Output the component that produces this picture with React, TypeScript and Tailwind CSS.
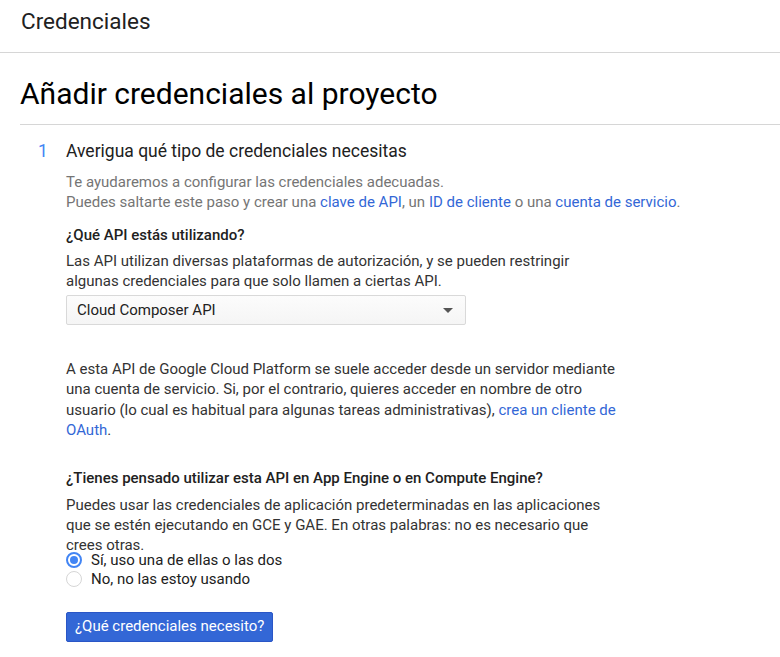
import React from "react";

export default function App() {
  const link = "text-[#3367d6]";
  return (
    <div className="w-[780px] h-[657px] bg-white overflow-hidden text-[#212121]" style={{ fontFamily: "Roboto, 'Liberation Sans', sans-serif" }}>
      <div className="h-[53px] border-b border-[#d6d6d6] pl-[21px] pt-[6px]">
        <div className="text-[22.5px] leading-[30px] text-[#212121]">Credenciales</div>
      </div>
      <div className="ml-[20px] border-b border-[#d6d6d6] pt-[22px] pb-[12px]">
        <h1 className="text-[30px] leading-[37px] text-[#000]">Añadir credenciales al proyecto</h1>
      </div>
      <div className="flex pt-[14px]">
        <div className="w-[66px] pl-[38px] text-[17.5px] leading-[24px] text-[#4285f4]">1</div>
        <div className="flex-1">
          <div className="text-[17.5px] leading-[24px] text-[#212121]">Averigua qué tipo de credenciales necesitas</div>
          <div className="mt-[10px] text-[15px] leading-[19.5px] text-[#757575]">
            <div>Te ayudaremos a configurar las credenciales adecuadas.</div>
            <div>
              Puedes saltarte este paso y crear una <span className={link}>clave de API</span>, un{" "}
              <span className={link}>ID de cliente</span> o una <span className={link}>cuenta de servicio</span>.
            </div>
          </div>
          <div className="mt-[13px] text-[15px] leading-[20px] font-medium text-[#212121]">¿Qué API estás utilizando?</div>
          <div className="mt-[6px] w-[540px] text-[15px] leading-[20px] text-[#333]">
            Las API utilizan diversas plataformas de autorización, y se pueden restringir algunas credenciales para que solo llamen a ciertas API.
          </div>
          <div className="mt-[4px] w-[400px] h-[30px] border border-[#d9d9d9] rounded-[2px] bg-gradient-to-b from-[#fcfcfc] to-[#f5f5f5] flex items-center justify-between pl-[10px] pr-[12px]">
            <span className="text-[15px] text-[#212121]">Cloud Composer API</span>
            <svg width="10" height="5" viewBox="0 0 10 5"><path d="M0 0 L10 0 L5 5 Z" fill="#555" /></svg>
          </div>
          <div className="mt-[34px] w-[560px] text-[15px] leading-[20.4px] text-[#333]">
            A esta API de Google Cloud Platform se suele acceder desde un servidor mediante una cuenta de servicio. Si, por el contrario, quieres acceder en nombre de otro usuario (lo cual es habitual para algunas tareas administrativas), <span className={link}>crea un cliente de OAuth</span>.
          </div>
          <div className="mt-[27px] text-[15px] leading-[20px] font-medium text-[#212121]">¿Tienes pensado utilizar esta API en App Engine o en Compute Engine?</div>
          <div className="mt-[7px] w-[548px] text-[15px] leading-[20px] text-[#333]">
            Puedes usar las credenciales de aplicación predeterminadas en las aplicaciones que se estén ejecutando en GCE y GAE. En otras palabras: no es necesario que crees otras.
          </div>
          <div className="-mt-[4px] flex flex-col">
            <label className="flex items-center h-[19px]">
              <span className="w-[16px] h-[16px] rounded-full border-2 border-[#4285f4] flex items-center justify-center">
                <span className="w-[8px] h-[8px] rounded-full bg-[#4285f4]" />
              </span>
              <span className="ml-[9px] text-[15px] leading-[19px] text-[#212121]">Sí, uso una de ellas o las dos</span>
            </label>
            <label className="flex items-center h-[19px]">
              <span className="w-[16px] h-[16px] rounded-full border border-[#d6d6d6] bg-white" />
              <span className="ml-[9px] text-[15px] leading-[19px] text-[#212121]">No, no las estoy usando</span>
            </label>
          </div>
          <button className="mt-[23px] h-[30px] px-[8px] rounded-[2px] bg-[#3367d6] border border-[#2a56c6] text-white text-[15px]">
            ¿Qué credenciales necesito?
          </button>
        </div>
      </div>
    </div>
  );
}
